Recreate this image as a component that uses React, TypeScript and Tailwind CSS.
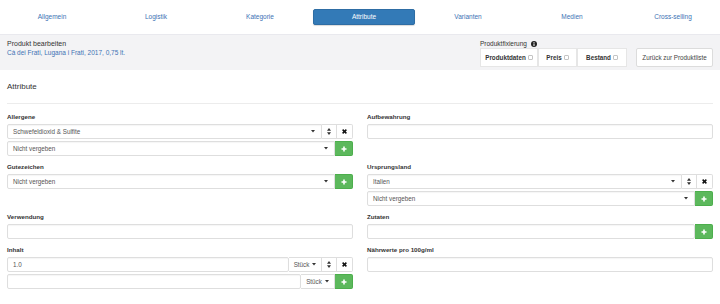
import React from "react";

// Produkt bearbeiten — Attribute tab, compact admin form
const tabs = ["Allgemein", "Logistik", "Kategorie", "Attribute", "Varianten", "Medien", "Cross-selling"];

export default function App() {
  return (
    <div className="h-[304px] w-[720px] overflow-hidden bg-white font-['Liberation_Sans',Arial,sans-serif] text-[#555]">
      <nav className="grid h-[35px] grid-cols-[repeat(6,104px)_98px] items-center border-b border-[#e9e9ee]">
        {tabs.map((t) =>
          t === "Attribute" ? (
            <div key={t} className="mx-auto flex h-[16px] w-[102px] items-center justify-center rounded-[2px] border border-[#2e6da4] bg-[#337ab7] text-[6.5px] text-white shadow-[0_1px_1px_rgba(0,0,0,0.15)]">{t}</div>
          ) : (
            <div key={t} className="text-center text-[6.5px] text-[#3c72b4]">{t}</div>
          )
        )}
      </nav>

      {/* header band */}
      <div className="flex h-[35px] items-start justify-between bg-[#f3f3f5] px-[7px]">
        <div className="pt-[4px]">
          <div className="text-[7px] leading-[9px] text-[#333]">Produkt bearbeiten</div>
          <div className="text-[6.5px] leading-[9px] text-[#3c72b4]">Cà dei Frati, Lugana i Frati, 2017, 0,75 lt.</div>
        </div>
        <div className="flex items-end gap-[9px] pt-[5px]">
          <div>
            <div className="flex h-[8px] items-center gap-[4px] text-[6.5px] text-[#333]">
              Produktfixierung <Info />
            </div>
            <div className="flex h-[19px]">
              <Fix label="Produktdaten" w="w-[58px]" />
              <Fix label="Preis" w="w-[39px]" />
              <Fix label="Bestand" w="w-[50px]" />
            </div>
          </div>
          <button className="flex h-[19px] w-[77px] items-center justify-center rounded-[2px] border border-[#dcdcdc] bg-white text-[6.3px] text-[#444]">Zurück zur Produktliste</button>
        </div>
      </div>

      <div className="px-[7px]">
        <div className="border-b border-[#ececec] pt-[12px] pb-[11px] text-[8px] leading-[10px] text-[#333]">Attribute</div>

        <div className="grid grid-cols-2 items-start gap-x-[14px] pt-[9px]">
          <Group label="Allergene">
            <Row>
              <Select value="Schwefeldioxid & Sulfite" />
              <Sort />
              <Remove />
            </Row>
            <Row>
              <Select value="Nicht vergeben" />
              <Plus />
            </Row>
          </Group>
          <Group label="Aufbewahrung">
            <Row><Input /></Row>
          </Group>

          <Group label="Gutezeichen">
            <Row>
              <Select value="Nicht vergeben" />
              <Plus />
            </Row>
          </Group>
          <Group label="Ursprungsland">
            <Row>
              <Select value="Italien" />
              <Sort />
              <Remove />
            </Row>
            <Row>
              <Select value="Nicht vergeben" />
              <Plus />
            </Row>
          </Group>

          <Group label="Verwendung">
            <Row><Input /></Row>
          </Group>
          <Group label="Zutaten">
            <Row>
              <Input />
              <Plus />
            </Row>
          </Group>

          <Group label="Inhalt">
            <Row>
              <Input value="1.0" />
              <Unit w="w-[33px]" />
              <Sort />
              <Remove />
            </Row>
            <Row>
              <Input />
              <Unit w="w-[34px]" />
              <Plus />
            </Row>
          </Group>
          <Group label="Nährwerte pro 100g/ml">
            <Row><Input /></Row>
          </Group>
        </div>
      </div>
    </div>
  );
}

function Group({ label, children }: { label: string; children: React.ReactNode }) {
  return (
    <div className="mb-[7px]">
      <div className="mb-[3px] h-[8px] text-[6.2px] font-bold leading-[8px] text-[#333]">{label}</div>
      <div className="flex flex-col gap-[2px]">{children}</div>
    </div>
  );
}

function Row({ children }: { children: React.ReactNode }) {
  return <div className="flex h-[15px] [&>*+*]:border-l-0">{children}</div>;
}

function Select({ value }: { value: string }) {
  return (
    <div className="flex min-w-0 flex-1 items-center justify-between rounded-l-[2px] border border-[#dedede] bg-white pr-[6px] pl-[5px] text-[6.3px] text-[#555] shadow-[inset_0_1px_1px_rgba(0,0,0,0.04)]">
      <span>{value}</span>
      <Caret />
    </div>
  );
}

function Input({ value }: { value?: string }) {
  return (
    <div className="flex min-w-0 flex-1 items-center rounded-[2px] border border-[#dedede] bg-white pl-[5px] text-[6.3px] text-[#555] shadow-[inset_0_1px_1px_rgba(0,0,0,0.04)]">
      {value}
    </div>
  );
}

function Unit({ w }: { w: string }) {
  return (
    <div className={`flex ${w} items-center justify-center gap-[3px] border border-[#dedede] bg-white text-[6.3px] text-[#555]`}>
      Stück <Caret />
    </div>
  );
}

function Sort() {
  return (
    <div className="flex w-[15px] items-center justify-center border border-[#dedede] bg-white">
      <svg width="4" height="7" viewBox="0 0 4 7"><path d="M2 0 L4 2.8 L0 2.8 Z M0 4.2 L4 4.2 L2 7 Z" fill="#333" /></svg>
    </div>
  );
}

function Remove() {
  return (
    <div className="flex w-[16px] items-center justify-center rounded-r-[2px] border border-[#dedede] bg-white">
      <svg width="5" height="5" viewBox="0 0 5 5"><path d="M0.6 0.6 L4.4 4.4 M4.4 0.6 L0.6 4.4" stroke="#111" strokeWidth="1.5" /></svg>
    </div>
  );
}

function Plus() {
  return (
    <div className="flex w-[18px] items-center justify-center rounded-r-[2px] border border-[#4cae4c] bg-[#5cb85c]">
      <svg width="6" height="6" viewBox="0 0 6 6"><path d="M3 0.5 V5.5 M0.5 3 H5.5" stroke="#fff" strokeWidth="1.6" /></svg>
    </div>
  );
}

function Caret() {
  return <svg width="4" height="2.5" viewBox="0 0 4 2.5"><path d="M0 0 H4 L2 2.5 Z" fill="#333" /></svg>;
}

function Info() {
  return (
    <svg width="6" height="6" viewBox="0 0 6 6">
      <circle cx="3" cy="3" r="3" fill="#222" />
      <rect x="2.5" y="1" width="1" height="0.9" fill="#fff" />
      <rect x="2.5" y="2.4" width="1" height="2.6" fill="#fff" />
    </svg>
  );
}

function Fix({ label, w }: { label: string; w: string }) {
  return (
    <div className={`flex ${w} items-center justify-center gap-[2px] border border-[#e6e6e6] bg-white text-[6.3px] font-bold text-[#333]`}>
      {label}
      <span className="inline-block h-[5px] w-[5px] rounded-[1px] border border-[#c4c4c4] bg-white" />
    </div>
  );
}
